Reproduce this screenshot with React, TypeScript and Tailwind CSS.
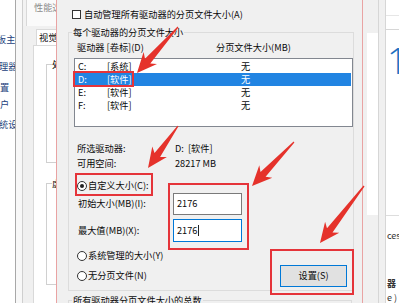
import React from "react";

type Pt = [number, number];

function arrowPoints(t: Pt, h: Pt): string {
  const dx = h[0] - t[0];
  const dy = h[1] - t[1];
  const len = Math.hypot(dx, dy);
  const ux = dx / len;
  const uy = dy / len;
  const nx = -uy;
  const ny = ux;
  const L = 16;
  const W = 9;
  const bx = h[0] - ux * L;
  const by = h[1] - uy * L;
  const wx = h[0] - ux * (L + 4);
  const wy = h[1] - uy * (L + 4);
  const pts: Pt[] = [
    [t[0] + nx * 0.6, t[1] + ny * 0.6],
    [bx + nx * 3.5, by + ny * 3.5],
    [wx + nx * W, wy + ny * W],
    [h[0], h[1]],
    [wx - nx * W, wy - ny * W],
    [bx - nx * 3.5, by - ny * 3.5],
    [t[0] - nx * 0.6, t[1] - ny * 0.6],
  ];
  return pts.map((p) => `${p[0].toFixed(1)},${p[1].toFixed(1)}`).join(" ");
}

const arrows: [Pt, Pt][] = [
  [[178, 27], [137, 73]],
  [[178, 126], [148, 168]],
  [[294, 142], [252, 186]],
  [[364, 186], [320, 243]],
];

function Radio({ checked }: { checked?: boolean }) {
  return (
    <div className="w-[10px] h-[10px] rounded-full border border-[#333] bg-white flex items-center justify-center shrink-0">
      {checked ? <div className="w-[4px] h-[4px] rounded-full bg-[#222]" /> : null}
    </div>
  );
}

const rows = [
  { l: "C:", v: "[系统]", sel: false },
  { l: "D:", v: "[软件]", sel: true },
  { l: "E:", v: "[软件]", sel: false },
  { l: "F:", v: "[软件]", sel: false },
];

export default function App() {
  return (
    <div
      className="relative w-[399px] h-[303px] overflow-hidden flex bg-[#f0f0f0] text-[#0a0a0a] text-[9.2px] leading-[13px]"
      style={{ fontFamily: '"Noto Sans CJK SC", "Noto Sans", sans-serif' }}
    >
      {/* left: control panel links */}
      <div className="w-[15px] shrink-0 bg-white flex flex-col overflow-hidden whitespace-nowrap text-[#233f7c] pt-[33px]">
        <div className="-ml-[3px]">板主</div>
        <div className="mt-[14px] -ml-[1px]">理器</div>
        <div className="mt-[8px]">置</div>
        <div className="mt-[4px]">户</div>
        <div className="mt-[7px] -ml-[1px]">统设</div>
      </div>
      <div className="w-[1px] shrink-0 bg-[#a8a8a8]" />
      <div className="w-[6px] shrink-0 bg-[#f8f8f8]" />
      <div className="w-[1px] shrink-0 bg-[#cfcfcf]" />
      {/* performance options window */}
      <div className="w-[33px] shrink-0 flex flex-col overflow-hidden">
        <div className="h-[26px] flex shrink-0">
          <div className="w-[4px] bg-[#f2f2f2] border-r border-[#d8d8d8]" />
          <div className="flex-1 bg-[#fafafa] pl-[7px] pt-[1px] text-[#8c8c8c] whitespace-nowrap overflow-hidden">
            性能选项
          </div>
        </div>
        <div className="flex-1 flex bg-[#f0f0f0]">
          <div className="w-[10px] shrink-0" />
          <div className="flex-1 flex flex-col overflow-hidden">
            <div className="h-[19px] shrink-0 pt-[3px] pl-[3px]">
              <div className="h-[16px] bg-white border-l border-t border-[#d9d9d9] pl-[2px] leading-[15px] whitespace-nowrap overflow-hidden">
                视觉效果
              </div>
            </div>
            <div className="flex-1 bg-white border-l border-t border-[#d9d9d9] pl-[12px] overflow-hidden">
              <fieldset className="mt-[12px] w-[60px] h-[105px] border border-[#d0d0d0]">
                <legend className="ml-[5px] whitespace-nowrap">处理器计划</legend>
              </fieldset>
              <fieldset className="mt-[14px] w-[60px] h-[108px] border border-[#d0d0d0]">
                <legend className="ml-[5px] whitespace-nowrap">虚拟内存</legend>
              </fieldset>
            </div>
          </div>
        </div>
      </div>

      {/* virtual memory dialog */}
      <div className="w-[307px] shrink-0 bg-[#f0f0f0] border-l border-r border-[#e9a3a3] flex flex-col">
        <div className="pt-[8px] pl-[15px] h-[21px] flex items-center gap-[3px] box-content">
          <div className="w-[9px] h-[9px] border border-[#333] bg-white shrink-0" />
          <span>自动管理所有驱动器的分页文件大小(A)</span>
        </div>
        <fieldset className="mt-[5px] ml-[11px] w-[284px] border border-[#dcdcdc] pb-[3px]">
          <legend className="ml-[3px] px-[1px]">每个驱动器的分页文件大小</legend>
          <div className="mt-[2px] h-[13px] flex">
            <div className="w-[147px] pl-[8px]">驱动器 [卷标](D)</div>
            <div>分页文件大小(MB)</div>
          </div>
          <div className="mt-[3.5px] ml-[5px] w-[279px] h-[69px] border border-[#828790] bg-white pt-[1px]">
            {rows.map((r) => (
              <div
                key={r.l}
                className={
                  r.sel
                    ? "h-[13px] flex items-center mr-[1px] bg-[#2184e2] text-white"
                    : "h-[13px] flex items-center mr-[1px]"
                }
              >
                <div className="w-[32px] pl-[3px]">{r.l}</div>
                <div className="w-[134px]">{r.v}</div>
                <div>无</div>
              </div>
            ))}
          </div>
          <div className="mt-[15.5px] h-[13px] flex">
            <div className="w-[106px] pl-[8px]">所选驱动器:</div>
            <div>D:&nbsp;&nbsp;[软件]</div>
          </div>
          <div className="mt-[2px] h-[13px] flex">
            <div className="w-[106px] pl-[8px]">可用空间:</div>
            <div>28217 MB</div>
          </div>
          <div className="mt-[9px] flex items-end">
            <div className="pl-[8px] pb-[4.5px] flex flex-col">
              <div className="h-[13px] flex items-center gap-[1px]">
                <Radio checked />
                <span>自定义大小(C):</span>
              </div>
              <div className="mt-[0.5px] h-[22px] flex items-center">
                <div className="w-[96px] pl-[1px]">初始大小(MB)(I):</div>
                <div className="w-[69px] h-[22px] border border-[#7a7a7a] bg-white pl-[3px] flex items-center">
                  2176
                </div>
              </div>
              <div className="mt-[4px] h-[23px] flex items-center">
                <div className="w-[96px] pl-[1px]">最大值(MB)(X):</div>
                <div className="w-[69px] h-[23px] border border-[#0078d7] bg-white pl-[3px] flex items-center">
                  2176
                  <span className="w-[1px] h-[11px] bg-[#222] ml-[1px]" />
                </div>
              </div>
              <div className="mt-[7.5px] h-[13px] flex items-center gap-[1px]">
                <Radio />
                <span>系统管理的大小(Y)</span>
              </div>
              <div className="mt-[7px] h-[13px] flex items-center gap-[1px]">
                <Radio />
                <span>无分页文件(N)</span>
              </div>
            </div>
            <div className="ml-auto mr-[6px] w-[67px] h-[22px] bg-[#e1e1e1] border border-[#0078d7] flex items-center justify-center">
              设置(S)
            </div>
          </div>
        </fieldset>
        <fieldset className="mt-[3.5px] ml-[11px] w-[284px] h-[40px] border border-[#dcdcdc]">
          <legend className="ml-[3px] px-[1px]">所有驱动器分页文件大小的总数</legend>
        </fieldset>
      </div>

      {/* right strip */}
      <div className="w-[4px] shrink-0 bg-[#f0f0f0]" />
      <div className="w-[11px] shrink-0 flex flex-col bg-[#f0f0f0]">
        <div className="h-[33px] shrink-0" />
        <div className="h-[182px] shrink-0 bg-white" />
      </div>
      <div className="w-[1px] shrink-0 bg-[#d6d6d6]" />
      <div className="w-[6px] shrink-0 bg-[#f0f0f0]" />
      <div className="w-[1px] shrink-0 bg-[#d6d6d6]" />
      <div className="w-[13px] shrink-0 bg-white flex flex-col overflow-hidden whitespace-nowrap">
        <div className="h-[16px] shrink-0 border-b border-[#e6e6e6]" />
        <div className="h-[14px] shrink-0 border-b border-[#d6d6d6]" />
        <div className="h-[185px] shrink-0 pt-[13px] pl-[1px]">
          <div
            className="text-[36px] leading-[36px] font-light text-[#1d6fc0]"
            style={{ fontFamily: '"Open Sans", sans-serif' }}
          >
            1
          </div>
        </div>
        <div className="border-t border-[#dddddd] pl-[1px] text-[9px] text-[#333]">
          <div className="mt-[12.5px]">ces</div>
          <div className="mt-[35px] font-bold">器</div>
          <div className="mt-[1px]">e )</div>
        </div>
      </div>

      {/* annotations */}
      <div className="absolute left-[73px] top-[71px] w-[61px] h-[16px] border-2 border-[#e5343a]" />
      <div className="absolute left-[75px] top-[173px] w-[78px] h-[23px] border-2 border-[#e5343a]" />
      <div className="absolute left-[168px] top-[183px] w-[81px] h-[67px] border-2 border-[#e5343a]" />
      <div className="absolute left-[270px] top-[249px] w-[84px] h-[46px] border-2 border-[#e5343a]" />
      <svg className="absolute left-0 top-0 pointer-events-none" width={399} height={303} viewBox="0 0 399 303">
        {arrows.map((a, i) => (
          <polygon key={i} points={arrowPoints(a[0], a[1])} fill="#e5322b" />
        ))}
      </svg>
    </div>
  );
}
